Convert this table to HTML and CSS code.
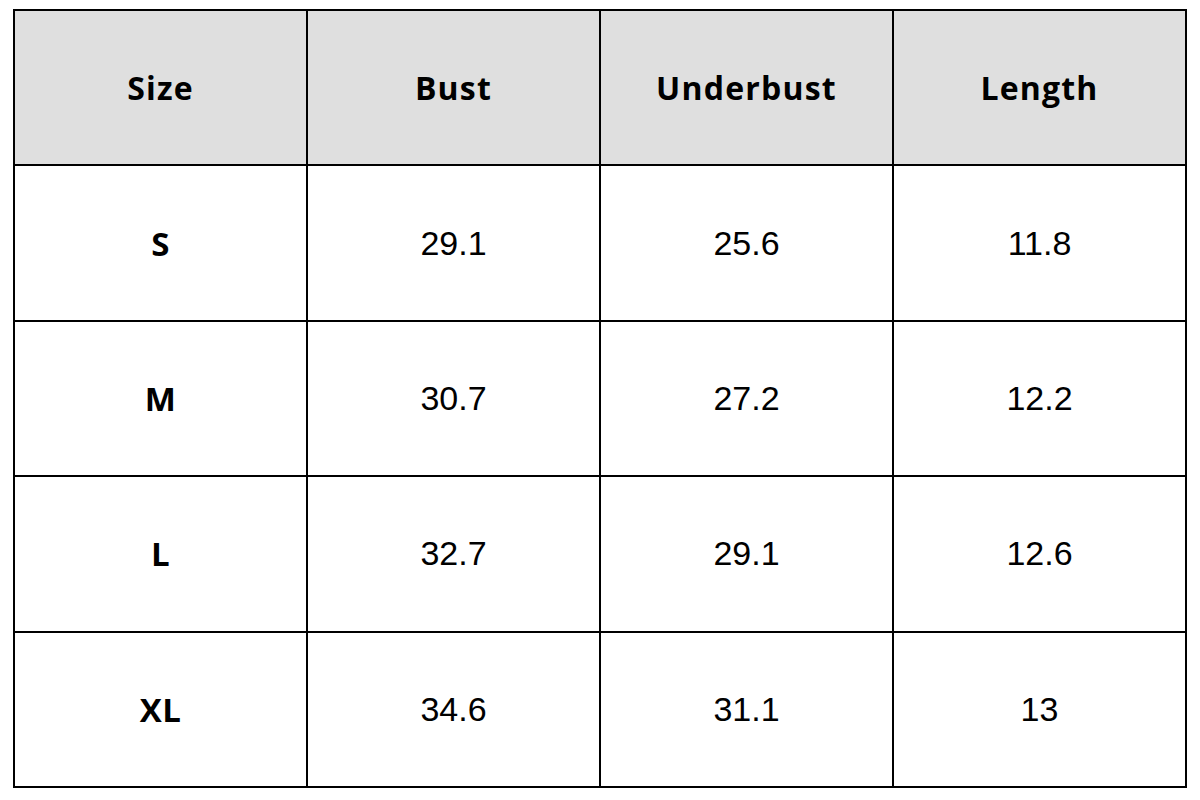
FILE: index.html
```html
<!DOCTYPE html>
<html>
<head>
<meta charset="utf-8">
<link rel="stylesheet" href="styles.css">
</head>
<body>
<div class="page">
  <div class="chart">
    <div class="cell head">Size</div>
    <div class="cell head">Bust</div>
    <div class="cell head">Underbust</div>
    <div class="cell head">Length</div>

    <div class="cell size">S</div>
    <div class="cell">29.1</div>
    <div class="cell">25.6</div>
    <div class="cell">11.8</div>

    <div class="cell size">M</div>
    <div class="cell">30.7</div>
    <div class="cell">27.2</div>
    <div class="cell">12.2</div>

    <div class="cell size">L</div>
    <div class="cell">32.7</div>
    <div class="cell">29.1</div>
    <div class="cell">12.6</div>

    <div class="cell size">XL</div>
    <div class="cell">34.6</div>
    <div class="cell">31.1</div>
    <div class="cell">13</div>
  </div>
</div>
</body>
</html>
```

FILE: styles.css
```css
html, body {
  margin: 0;
  padding: 0;
  background: #ffffff;
}

.page {
  padding: 9px 0 0 13px;
}

.chart {
  width: 1174px;
  height: 779px;
  box-sizing: border-box;
  padding: 2px;
  gap: 2px;
  background: #000000;
  display: grid;
  grid-template-columns: repeat(4, 1fr);
  grid-template-rows: repeat(5, 1fr);
}

.cell {
  background: #ffffff;
  display: flex;
  align-items: center;
  justify-content: center;
  font-family: "Liberation Sans", Arial, sans-serif;
  font-size: 34px;
  color: #000000;
}

.head {
  background: #dfdfdf;
  font-family: "Open Sans", sans-serif;
  font-weight: 700;
  font-size: 32px;
  letter-spacing: 1.2px;
}

.size {
  font-family: "Open Sans", sans-serif;
  font-weight: 700;
  font-size: 33px;
  letter-spacing: 0.5px;
}
```
